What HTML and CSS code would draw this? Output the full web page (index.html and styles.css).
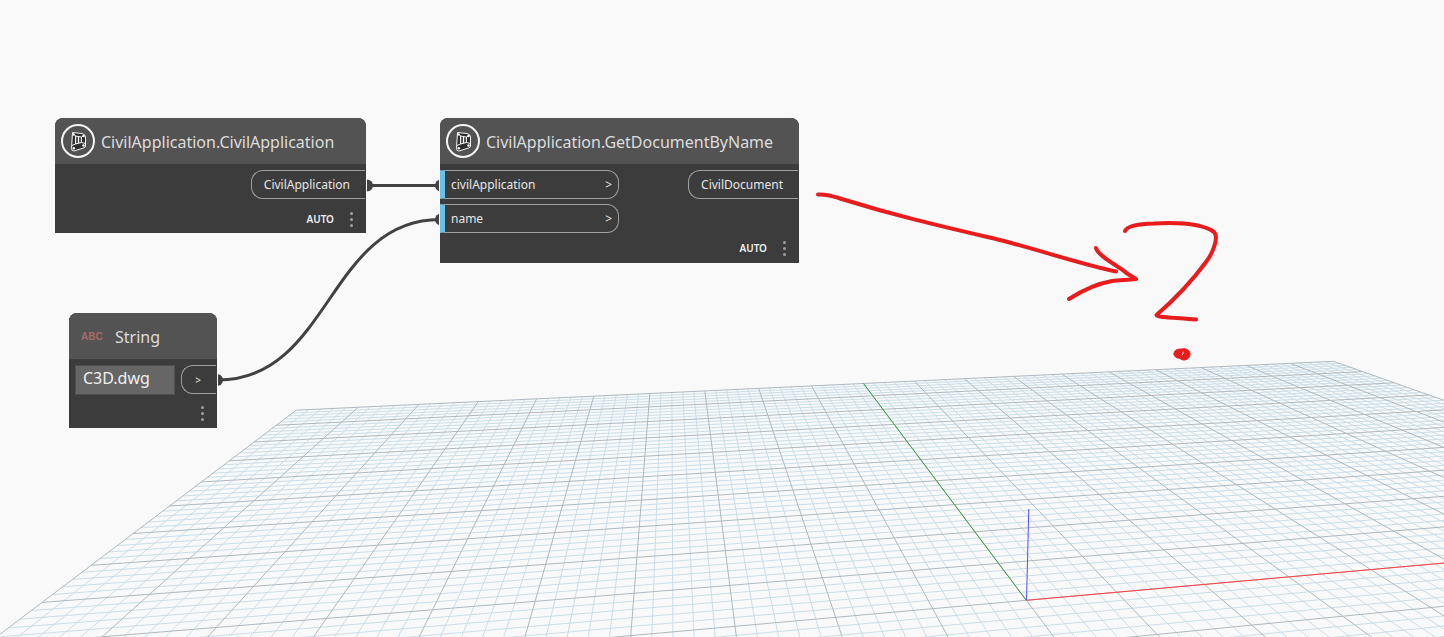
FILE: index.html
```html
<!DOCTYPE html>
<html lang="en">
<head>
  <meta charset="UTF-8">
  <meta name="viewport" content="width=device-width, initial-scale=1.0">
  <title>Graph Workspace</title>
  <link rel="stylesheet" href="styles.css">
</head>
<body>
  <main class="workspace">
    <!-- 3D background preview -->
    <svg class="layer" aria-hidden="true">
      <path id="gridMinor" class="grid-minor" />
      <path id="gridMajor" class="grid-major" />
      <path id="axisX" class="axis axis-x" />
      <path id="axisY" class="axis axis-y" />
      <path class="axis axis-z" d="M1026.5 600 L1028.8 509" />
    </svg>

    <!-- Connectors -->
    <svg class="layer" aria-hidden="true">
      <g class="wire">
        <path d="M367 185.5 H440" />
        <path d="M218 380 C330 380 328 219.5 440 219.5" />
      </g>
      <g class="wire-end">
        <circle cx="367" cy="185.5" r="6" />
        <circle cx="441" cy="185.5" r="6" />
        <circle cx="217" cy="380" r="6" />
        <circle cx="441" cy="219.5" r="6" />
      </g>
    </svg>

    <svg class="symbols" aria-hidden="true">
      <symbol id="civil" viewBox="0 0 34 34">
        <circle cx="17" cy="17" r="16" stroke-width="2" />
        <g stroke-width="1">
          <path fill="#2c2c2c" d="M11.5 8.5 L21 9.5 Q24.5 10.5 24.5 13 V22 Q24.5 23.5 22.5 24 L13 27 Q10.5 27 10.5 24.5 Z" />
          <path fill="#535353" d="M14.5 12 L20.5 13 V18.5 L14.5 20 Z" />
          <path d="M17.5 12.5 V19 M11 21.5 L14.5 20 M20.5 18.5 L24.5 19.5 M11.5 9 L14.5 12 M23.5 11.5 L20.5 13" />
        </g>
        <g fill="#f5f5f5" stroke="none">
          <circle cx="12.5" cy="10.5" r="1.3" />
          <circle cx="22.5" cy="12" r="1.3" />
          <circle cx="22.5" cy="21.5" r="1.3" />
          <circle cx="12.8" cy="24.3" r="1.3" />
        </g>
      </symbol>
    </svg>

    <section class="node node-app">
      <header class="node-header">
        <svg class="node-icon"><use href="#civil" /></svg>
        <h2>CivilApplication.CivilApplication</h2>
      </header>
      <div class="node-body">
        <div class="ports outputs">
          <div class="port port-out">CivilApplication</div>
        </div>
      </div>
      <footer class="node-footer">
        <span>AUTO</span>
        <button class="menu" aria-label="Node menu"><i></i><i></i><i></i></button>
      </footer>
    </section>

    <section class="node node-doc">
      <header class="node-header">
        <svg class="node-icon"><use href="#civil" /></svg>
        <h2>CivilApplication.GetDocumentByName</h2>
      </header>
      <div class="node-body">
        <div class="ports inputs">
          <div class="port port-in">civilApplication <span>&gt;</span></div>
          <div class="port port-in">name <span>&gt;</span></div>
        </div>
        <div class="ports outputs">
          <div class="port port-out">CivilDocument</div>
        </div>
      </div>
      <footer class="node-footer">
        <span>AUTO</span>
        <button class="menu" aria-label="Node menu"><i></i><i></i><i></i></button>
      </footer>
    </section>

    <section class="node node-string">
      <header class="node-header">
        <span class="abc">ABC</span>
        <h2>String</h2>
      </header>
      <div class="node-body">
        <input class="string-value" type="text" value="C3D.dwg" aria-label="String value">
        <div class="ports outputs">
          <div class="port port-out port-small">&gt;</div>
        </div>
      </div>
      <footer class="node-footer">
        <button class="menu" aria-label="Node menu"><i></i><i></i><i></i></button>
      </footer>
    </section>

    <!-- Red pen notes -->
    <svg class="layer pen" aria-hidden="true">
      <path d="M818 194.5 C827 194 832 196 840 198.500 C900 217 940 226 1000 240 C1043 251 1080 264 1116 271.500" />
      <path d="M1096 248 C1098 256 1118 266 1124 271 C1128 275 1132 276 1136 279 C1128 280 1120 280 1112 281 C1095 284 1083 290 1069 299" />
      <path d="M1125 231 C1127 226 1137 224 1154 223.500 C1182 222 1204 225 1214 232 C1219 237 1213 253 1206 262 C1192 281 1175 299 1156.500 315 C1157 317 1163 317 1196 319.500" />
      <path class="pen-dot" d="M1174 354 C1174 350 1177 349 1182 349 C1187 348 1190 351 1190 354 C1190 358 1187 360 1184 360 C1181 360 1180 358 1178 358 C1176 358 1174 356 1174 354 Z" />
      <path class="pen-gap" d="M1183 352 L1183 354 L1182 355" />
    </svg>
  </main>

  <script>
    // Project a point of the ground plane to the screen
    function project(u, v) {
      const w = 1 + 0.01727 * u + 0.0845 * v;
      const x = (1026.3 + 109.78 * u + 56.68 * v) / w;
      const y = (600.3 + 2.153 * u + 10.72 * v) / w;
      return x.toFixed(1) + " " + y.toFixed(1);
    }

    function line(u1, v1, u2, v2) {
      return "M" + project(u1, v1) + "L" + project(u2, v2);
    }

    let minor = "";
    let major = "";

    // Five small cells for each large one
    for (let i = -50; i <= 50; i++) {
      let d = line(i / 5, -4, i / 5, 10);
      if (i >= -20) {
        d += line(-10, i / 5, 10, i / 5);
      }
      if (i % 5 === 0) {
        major += d;
      } else {
        minor += d;
      }
    }

    document.getElementById("gridMinor").setAttribute("d", minor);
    document.getElementById("gridMajor").setAttribute("d", major);
    document.getElementById("axisX").setAttribute("d", line(0, 0, 10, 0));
    document.getElementById("axisY").setAttribute("d", line(0, 0, 0, 10));
  </script>
</body>
</html>
```
FILE: styles.css
```css
/* Global Styles */
* {
  margin: 0;
  padding: 0;
  box-sizing: border-box;
}

body {
  background: #f9f9f9;
  font-family: 'Noto Sans', sans-serif;
}

.workspace {
  position: relative;
  width: 100%;
  height: 100vh;
  overflow: hidden;
}

.layer {
  position: absolute;
  top: 0;
  left: 0;
  width: 100%;
  height: 100%;
  fill: none;
  pointer-events: none;
}

.symbols {
  position: absolute;
  width: 0;
  height: 0;
}

/* Grid */
.grid-minor {
  stroke: #c9deea;
}

.grid-major {
  stroke: #adb9c0;
}

.axis-x {
  stroke: #ff4040;
}

.axis-y {
  stroke: #3c9f3c;
}

.axis-z {
  stroke: #5050ff;
}

/* Connectors */
.wire {
  stroke: #434243;
  stroke-width: 3;
}

.wire-end {
  fill: #434243;
}

/* Nodes */
.node {
  position: absolute;
  background: #3c3c3c;
  border-radius: 8px 8px 0 0;
  box-shadow: 0 0 0 1px #f9f9f9;
  color: #dcdcdc;
}

.node-app {
  left: 55px;
  top: 118px;
  width: 311px;
}

.node-doc {
  left: 440px;
  top: 118px;
  width: 359px;
}

.node-string {
  left: 69px;
  top: 313px;
  width: 148px;
}

.node-header {
  display: flex;
  align-items: center;
  gap: 6px;
  height: 46px;
  padding: 0 6px;
  background: #535353;
  border-radius: 8px 8px 0 0;
}

.node-header h2 {
  padding-top: 2px;
  font-size: 16px;
  font-weight: 400;
  line-height: 24px;
  white-space: nowrap;
}

.node-icon {
  flex: none;
  width: 34px;
  height: 34px;
  fill: none;
  stroke: #f5f5f5;
}

.abc {
  width: 34px;
  padding-left: 6px;
  color: #a86a6a;
  font-family: 'Liberation Sans', sans-serif;
  font-size: 10px;
  font-weight: bold;
}

.node-body {
  display: flex;
  justify-content: space-between;
  padding-top: 6px;
}

.ports {
  display: flex;
  flex-direction: column;
  gap: 5px;
}

.outputs {
  margin-left: auto;
  padding-right: 1px;
}

.port {
  display: flex;
  align-items: center;
  height: 29px;
  border: 1px solid #a0a0a0;
  color: #e6e6e6;
  font-size: 12px;
}

.port-in {
  justify-content: space-between;
  width: 179px;
  padding: 0 6px;
  border-left: 5px solid #6ac0e7;
  border-radius: 0 12px 12px 0;
}

.port-out {
  padding: 0 15px 0 12px;
  border-right: none;
  border-radius: 12px 0 0 12px;
}

.port-small {
  padding-left: 13px;
  font-size: 10px;
}

.string-value {
  width: 100px;
  height: 30px;
  margin-left: 6px;
  padding: 0 7px 4px;
  background: #666;
  border: 1px solid #505050;
  color: #f0f0f0;
  font-family: inherit;
  font-size: 16px;
}

.node-footer {
  display: flex;
  justify-content: flex-end;
  align-items: center;
  gap: 15px;
  height: 30px;
  padding-right: 12px;
  color: #f0f0f0;
  font-size: 10px;
  font-weight: 600;
}

.node-app .node-footer {
  height: 34px;
  padding-top: 6px;
}

.node-string .node-footer {
  height: 33px;
  padding-top: 4px;
}

.menu {
  display: flex;
  flex-direction: column;
  align-items: center;
  gap: 3px;
  width: 5px;
  background: none;
  border: none;
  cursor: pointer;
}

.menu i {
  width: 3px;
  height: 3px;
  background: #a0a0a0;
  border-radius: 50%;
}

/* Pen notes */
.pen {
  stroke: #e81c1c;
  stroke-width: 4;
  stroke-linecap: round;
  stroke-linejoin: round;
}

.pen-dot {
  fill: #e81c1c;
  stroke-width: 1;
}

.pen-gap {
  stroke: #f9d0d0;
  stroke-width: 1;
}
```
